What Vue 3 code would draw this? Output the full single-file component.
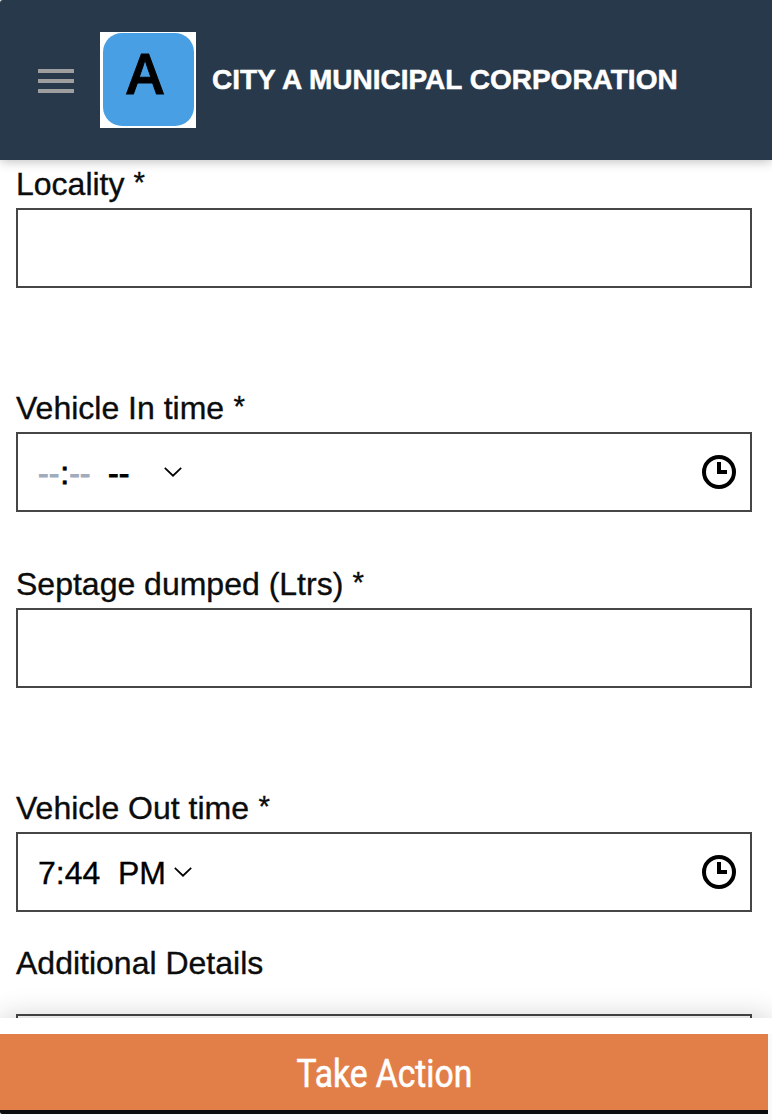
<script setup>
const fields = [
  { id: 'locality', label: 'Locality', type: 'text', roomy: true },
  { id: 'in', label: 'Vehicle In time', type: 'empty-time' },
  { id: 'septage', label: 'Septage dumped (Ltrs)', type: 'text', roomy: true },
  { id: 'out', label: 'Vehicle Out time', type: 'time' }
]
</script>

<template>
  <div class="screen">
    <header class="topbar">
      <svg class="menu" width="36" height="24" viewBox="0 0 36 24">
        <path d="M0 0h36v4H0zM0 10h36v4H0zM0 20h36v4H0z" fill="#9e9e9e" />
      </svg>
      <div class="logo"><div class="tile"><span>A</span></div></div>
      <h1>CITY A MUNICIPAL CORPORATION</h1>
    </header>

    <main class="form">
      <div v-for="f in fields" :key="f.id" class="field" :class="{ roomy: f.roomy }">
        <label>{{ f.label }} <span class="star">*</span></label>
        <div class="box">
          <template v-if="f.type !== 'text'">
            <div v-if="f.type === 'empty-time'" class="value blank">
              <span class="digits"><i>--</i><b>:</b><i>--</i></span><span class="period">--</span>
            </div>
            <div v-else class="value">
              <span class="digits">7:44</span><span class="period">PM</span>
            </div>
            <svg class="chevron" width="18" height="10" viewBox="0 0 18 10">
              <path d="M.8.8 9 8.7 17.2.8" fill="none" stroke="#000" stroke-width="1.7" />
            </svg>
            <svg class="clock" width="34" height="34" viewBox="0 0 34 34">
              <circle cx="17" cy="17" r="15" fill="none" stroke="#000" stroke-width="4" />
              <path d="M17 7v10h8" fill="none" stroke="#000" stroke-width="4" />
            </svg>
          </template>
        </div>
      </div>
      <div class="details">
        <label>Additional Details</label>
        <div class="box"></div>
      </div>
    </main>

    <footer>
      <button><span>Take Action</span></button>
    </footer>
  </div>
</template>

<style>
body { background: #fafafa; }
</style>

<style scoped>
.screen {
  width: 772px;
  height: 1120px;
  overflow: hidden;
  display: flex;
  flex-direction: column;
  box-sizing: border-box;
  font-family: "Liberation Sans", Arial, sans-serif;
  background: #fafafa;
}
.topbar {
  height: 160px;
  flex: none;
  box-sizing: border-box;
  padding-left: 38px;
  display: flex;
  align-items: center;
  background: #28394b;
  border-top-left-radius: 3px;
  box-shadow: 0 1px 12px rgba(0, 0, 0, .28);
  z-index: 1;
}
.menu { margin-top: 2px; }
.logo {
  width: 96px;
  height: 96px;
  margin-left: 26px;
  box-sizing: border-box;
  padding: 1px 2px 2px 3px;
  background: #fff;
}
.tile {
  height: 93px;
  border-radius: 19px;
  background: #499fe3;
  text-align: center;
}
.tile span {
  display: block;
  font: 600 56px/78px "Open Sans", sans-serif;
  -webkit-text-stroke: 1px #000;
  color: #000;
  padding-right: 7px;
}
h1 {
  margin: 0 0 0 16px;
  font-size: 28px;
  line-height: 32px;
  font-weight: 700;
  -webkit-text-stroke: .5px #fff;
  color: #fff;
  white-space: nowrap;
}
.form {
  height: 858px;
  flex: none;
  box-sizing: border-box;
  padding: 8px 20px 0 16px;
  overflow: hidden;
  background: #fff;
}
.field { margin-bottom: 56px; }
.field.roomy { margin-bottom: 104px; }
.field:nth-child(4) { margin-bottom: 35px; }
label {
  display: block;
  height: 40px;
  font-size: 32px;
  line-height: 32px;
  color: #0b0c0c;
  -webkit-text-stroke: .35px #0b0c0c;
}
.star { display: inline-block; transform: translateY(-2px) scale(.92); }
.box {
  height: 80px;
  box-sizing: border-box;
  border: 2px solid #464646;
  display: flex;
  align-items: center;
  padding: 0 14px 0 20px;
}
.details label { height: 67px; }
.value {
  display: flex;
  gap: 18px;
  font-size: 32px;
  line-height: 36px;
  margin-top: 2px;
  -webkit-text-stroke: .35px currentColor;
}
.digits { width: 62px; white-space: nowrap; }
.blank .digits { width: 52px; }
.blank .period { -webkit-text-stroke: .9px #000; }
.period { width: 56px; }
.blank i { font-style: normal; color: #a0abbd; -webkit-text-stroke: .9px #a0abbd; }
.blank i:last-child { display: inline-block; transform: translateX(1px); }
.blank b { font-weight: 400; display: inline-block; transform: translateX(1px); -webkit-text-stroke: .8px #000; }
.chevron { flex: none; }
.clock { margin-left: auto; }
footer {
  height: 102px;
  flex: none;
  box-sizing: border-box;
  padding: 16px 4px 6px 0;
  background: linear-gradient(#fff 16px, #fafafa 16px);
  box-shadow: 0 0 28px rgba(0, 0, 0, .2);
  clip-path: inset(-36px 0 0 0);
  z-index: 1;
}
button {
  display: block;
  width: 768px;
  height: 80px;
  border: 0;
  border-bottom: 4px solid #0b0c0c;
  border-bottom-left-radius: 2px;
  padding: 0;
  background: #e27e48;
  color: #fff;
  font: 400 38px/76px Roboto, sans-serif;
  -webkit-text-stroke: .6px #fff;
}
button span { display: inline-block; transform: translateY(2px) scaleX(.885); }
</style>
